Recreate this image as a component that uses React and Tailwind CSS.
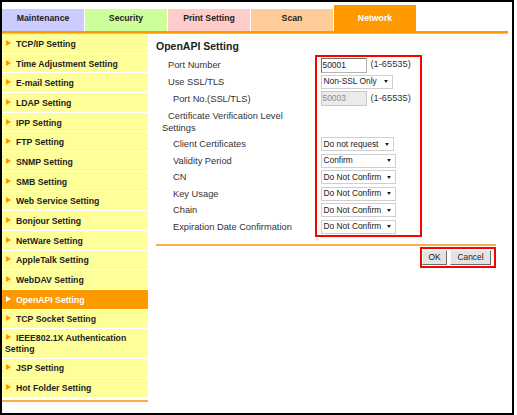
import React from 'react';

const tabs = [
  { name: 'Maintenance', bg: 'bg-[#ccccff]' },
  { name: 'Security', bg: 'bg-[#ccff99]' },
  { name: 'Print Setting', bg: 'bg-[#ffcccc]' },
  { name: 'Scan', bg: 'bg-[#ffcc99]' },
];

const menu = [
  'TCP/IP Setting',
  'Time Adjustment Setting',
  'E-mail Setting',
  'LDAP Setting',
  'IPP Setting',
  'FTP Setting',
  'SNMP Setting',
  'SMB Setting',
  'Web Service Setting',
  'Bonjour Setting',
  'NetWare Setting',
  'AppleTalk Setting',
  'WebDAV Setting',
  'OpenAPI Setting',
  'TCP Socket Setting',
  'IEEE802.1X Authentication Setting',
  'JSP Setting',
  'Hot Folder Setting',
];

function Arrow({ white }) {
  return (
    <span
      className={`inline-block w-0 h-0 ml-[1px] mr-[5px] align-[1px] border-y-[3.5px] border-y-transparent border-l-[5px] ${
        white ? 'border-l-white' : 'border-l-[#ff9900]'
      }`}
    />
  );
}

function MenuItem({ label }) {
  const active = label === 'OpenAPI Setting';
  const tall = label.startsWith('IEEE');
  return (
    <div
      className={`flex items-center pl-[3px] pr-[4px] pt-[2px] border-b border-white leading-[11px] font-bold text-[8.7px] ${
        tall ? 'h-[29.3px]' : 'h-[19.7px]'
      } ${active ? 'bg-[#ff9900] text-white' : 'bg-[#ffff99] text-[#222]'}`}
    >
      <div>
        <Arrow white={active} />
        {label}
      </div>
    </div>
  );
}

function Select({ value, w }) {
  return (
    <div
      className={`flex items-center justify-between h-[14px] pl-[2px] pr-[4px] bg-white border border-[#cfcfcf] text-[#222] text-[8.4px] whitespace-nowrap ${w}`}
    >
      <span>{value}</span>
      <span className="shrink-0 w-0 h-0 border-x-[2.5px] border-x-transparent border-t-[3px] border-t-[#222]" />
    </div>
  );
}

function Input({ value, disabled }) {
  return (
    <div
      className={`flex items-center w-[46px] h-[15px] pl-[1px] border text-[8.4px] ${
        disabled
          ? 'bg-[#ebebeb] text-[#8a8a8a] border-[#c8c8c8]'
          : 'bg-white text-[#222] border-[#b5b5b5] border-t-[#707070] border-l-[#707070]'
      }`}
    >
      {value}
    </div>
  );
}

function Button({ children, w }) {
  return (
    <div
      className={`flex items-center justify-center h-[15px] ${w} bg-[#e3e3e3] text-[#222] text-[8.4px] border border-t-[#f8f8f8] border-l-[#f8f8f8] border-b-[#6b6b6b] border-r-[#6b6b6b]`}
    >
      {children}
    </div>
  );
}

export default function App() {
  const single = 'flex items-center';
  return (
    <div className="w-[514px] h-[415px] border-2 border-black bg-white overflow-hidden font-['Liberation_Sans',Arial,sans-serif]">
      {/* tabs */}
      <div className="flex items-end gap-px pt-[3px]">
        {tabs.map((t) => (
          <div
            key={t.name}
            className={`w-[82px] h-[22px] flex items-end justify-center pb-[7px] leading-[11px] font-bold text-[8.7px] text-[#222] ${t.bg}`}
          >
            {t.name}
          </div>
        ))}
        <div className="w-[82px] h-[26px] flex items-end justify-center pb-[7px] leading-[11px] font-bold text-[8.7px] text-white bg-[#ff9900]">
          Network
        </div>
      </div>
      <div className="w-[506px] h-[3px] bg-[#ff9900] border-b border-[#ffb84d]" />

      <div className="flex">
        {/* sidebar */}
        <div className="w-[146px] shrink-0">
          {menu.map((m) => (
            <MenuItem key={m} label={m} />
          ))}
          <div className="mt-[2.5px] h-[2px] bg-[#fcac4a]" />
        </div>

        {/* main */}
        <div className="w-[340px] ml-[8px] text-[9.3px] text-[#333]">
          <div className="mt-[5px] mb-[2px] leading-[14px] font-bold text-[10.5px] text-[#222]">OpenAPI Setting</div>

          <div className="flex items-start">
            <div className="w-[159px] pt-[2px] leading-[12px]">
              <div className={`${single} h-[16px] pl-[12px]`}>Port Number</div>
              <div className={`${single} h-[17px] pl-[12px]`}>Use SSL/TLS</div>
              <div className={`${single} h-[17px] pl-[17px]`}>Port No.(SSL/TLS)</div>
              <div className={`${single} h-[29px] pl-[6px] pr-[20px]`}>
                <div className="indent-[6px]">Certificate Verification Level Settings</div>
              </div>
              <div className={`${single} h-[16.5px] pl-[17px]`}>Client Certificates</div>
              <div className={`${single} h-[16.5px] pl-[17px]`}>Validity Period</div>
              <div className={`${single} h-[16.5px] pl-[17px]`}>CN</div>
              <div className={`${single} h-[16.5px] pl-[17px]`}>Key Usage</div>
              <div className={`${single} h-[16.5px] pl-[17px]`}>Chain</div>
              <div className={`${single} h-[16.5px] pl-[17px]`}>Expiration Date Confirmation</div>
            </div>

            <div className="w-[107px] border-2 border-[#ff0000] pl-[3.5px]">
              <div className={`${single} h-[16px] gap-[4px]`}>
                <Input value="50001" />
                <span>(1-65535)</span>
              </div>
              <div className={`${single} h-[17px]`}>
                <Select value="Non-SSL Only" w="w-[72px]" />
              </div>
              <div className={`${single} h-[17px] gap-[4px]`}>
                <Input value="50003" disabled />
                <span>(1-65535)</span>
              </div>
              <div className="h-[29px]" />
              <div className={`${single} h-[16.5px]`}>
                <Select value="Do not request" w="w-[73px]" />
              </div>
              <div className={`${single} h-[16.5px]`}>
                <Select value="Confirm" w="w-[75px]" />
              </div>
              <div className={`${single} h-[16.5px]`}>
                <Select value="Do Not Confirm" w="w-[75px]" />
              </div>
              <div className={`${single} h-[16.5px]`}>
                <Select value="Do Not Confirm" w="w-[75px]" />
              </div>
              <div className={`${single} h-[16.5px]`}>
                <Select value="Do Not Confirm" w="w-[75px]" />
              </div>
              <div className={`${single} h-[16.5px]`}>
                <Select value="Do Not Confirm" w="w-[75px]" />
              </div>
            </div>
          </div>

          <div className="mt-[7px] h-[2px] bg-[#fcac4a]" />

          <div className="flex justify-end mt-[1px]">
            <div className="flex gap-[3px] border-2 border-[#ff0000] pr-[3px] py-[1px]">
              <Button w="w-[25px]">OK</Button>
              <Button w="w-[41px]">Cancel</Button>
            </div>
          </div>
        </div>
      </div>
    </div>
  );
}
